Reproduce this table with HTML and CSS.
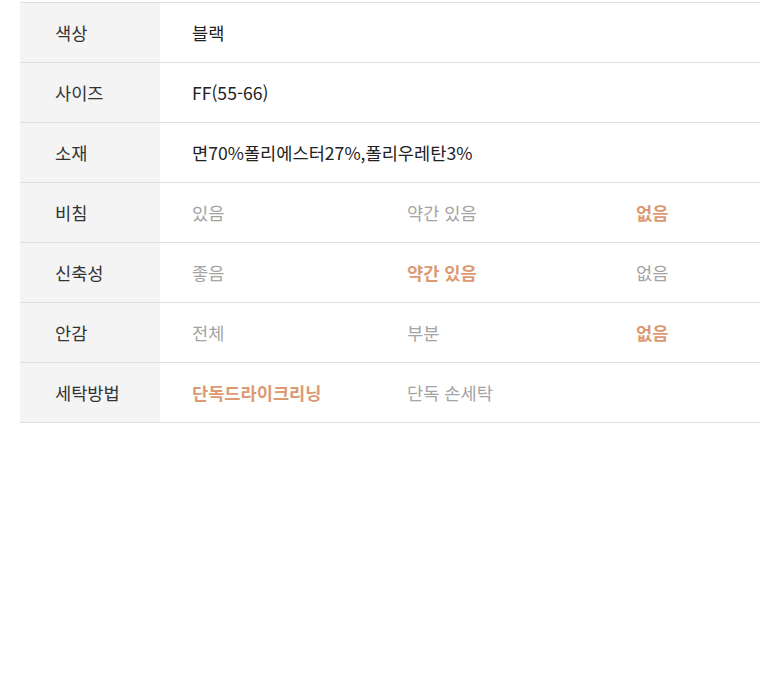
FILE: index.html
```html
<!DOCTYPE html>
<html lang="ko">
<head>
<meta charset="utf-8">
<link rel="stylesheet" href="styles.css">
</head>
<body>
<div class="spec">
  <div class="row"><div class="label">색상</div><div class="value">블랙</div></div>
  <div class="row"><div class="label">사이즈</div><div class="value">FF(55-66)</div></div>
  <div class="row"><div class="label">소재</div><div class="value">면70%폴리에스터27%,폴리우레탄3%</div></div>
  <div class="row"><div class="label">비침</div><div class="value opts"><span class="off">있음</span><span class="off">약간 있음</span><span class="on">없음</span></div></div>
  <div class="row"><div class="label">신축성</div><div class="value opts"><span class="off">좋음</span><span class="on">약간 있음</span><span class="off">없음</span></div></div>
  <div class="row"><div class="label">안감</div><div class="value opts"><span class="off">전체</span><span class="off">부분</span><span class="on">없음</span></div></div>
  <div class="row"><div class="label">세탁방법</div><div class="value opts"><span class="on">단독드라이크리닝</span><span class="off">단독 손세탁</span><span></span></div></div>
</div>
</body>
</html>
```

FILE: styles.css
```css
html, body {
  margin: 0;
  padding: 0;
  background: #fff;
}
body {
  font-family: "Noto Sans CJK KR", "Noto Sans", sans-serif;
  font-size: 17.6px;
  color: #222;
}
.spec {
  margin: 2px 20px 0 20px;
  border-top: 1px solid #dedede;
}
.row {
  display: flex;
  height: 59px;
  border-bottom: 1px solid #dedede;
}
.label {
  width: 140px;
  box-sizing: border-box;
  padding-left: 35px;
  background: #f4f4f4;
  display: flex;
  align-items: center;
  color: #333;
}
.value {
  flex: 1;
  padding-left: 32px;
  display: flex;
  align-items: center;
  color: #222;
}
.opts {
  display: grid;
  grid-template-columns: 215px 229px 1fr;
  align-items: center;
}
.off {
  color: #a4a4a4;
}
.on {
  color: #dd9a72;
  font-weight: 700;
}
```
